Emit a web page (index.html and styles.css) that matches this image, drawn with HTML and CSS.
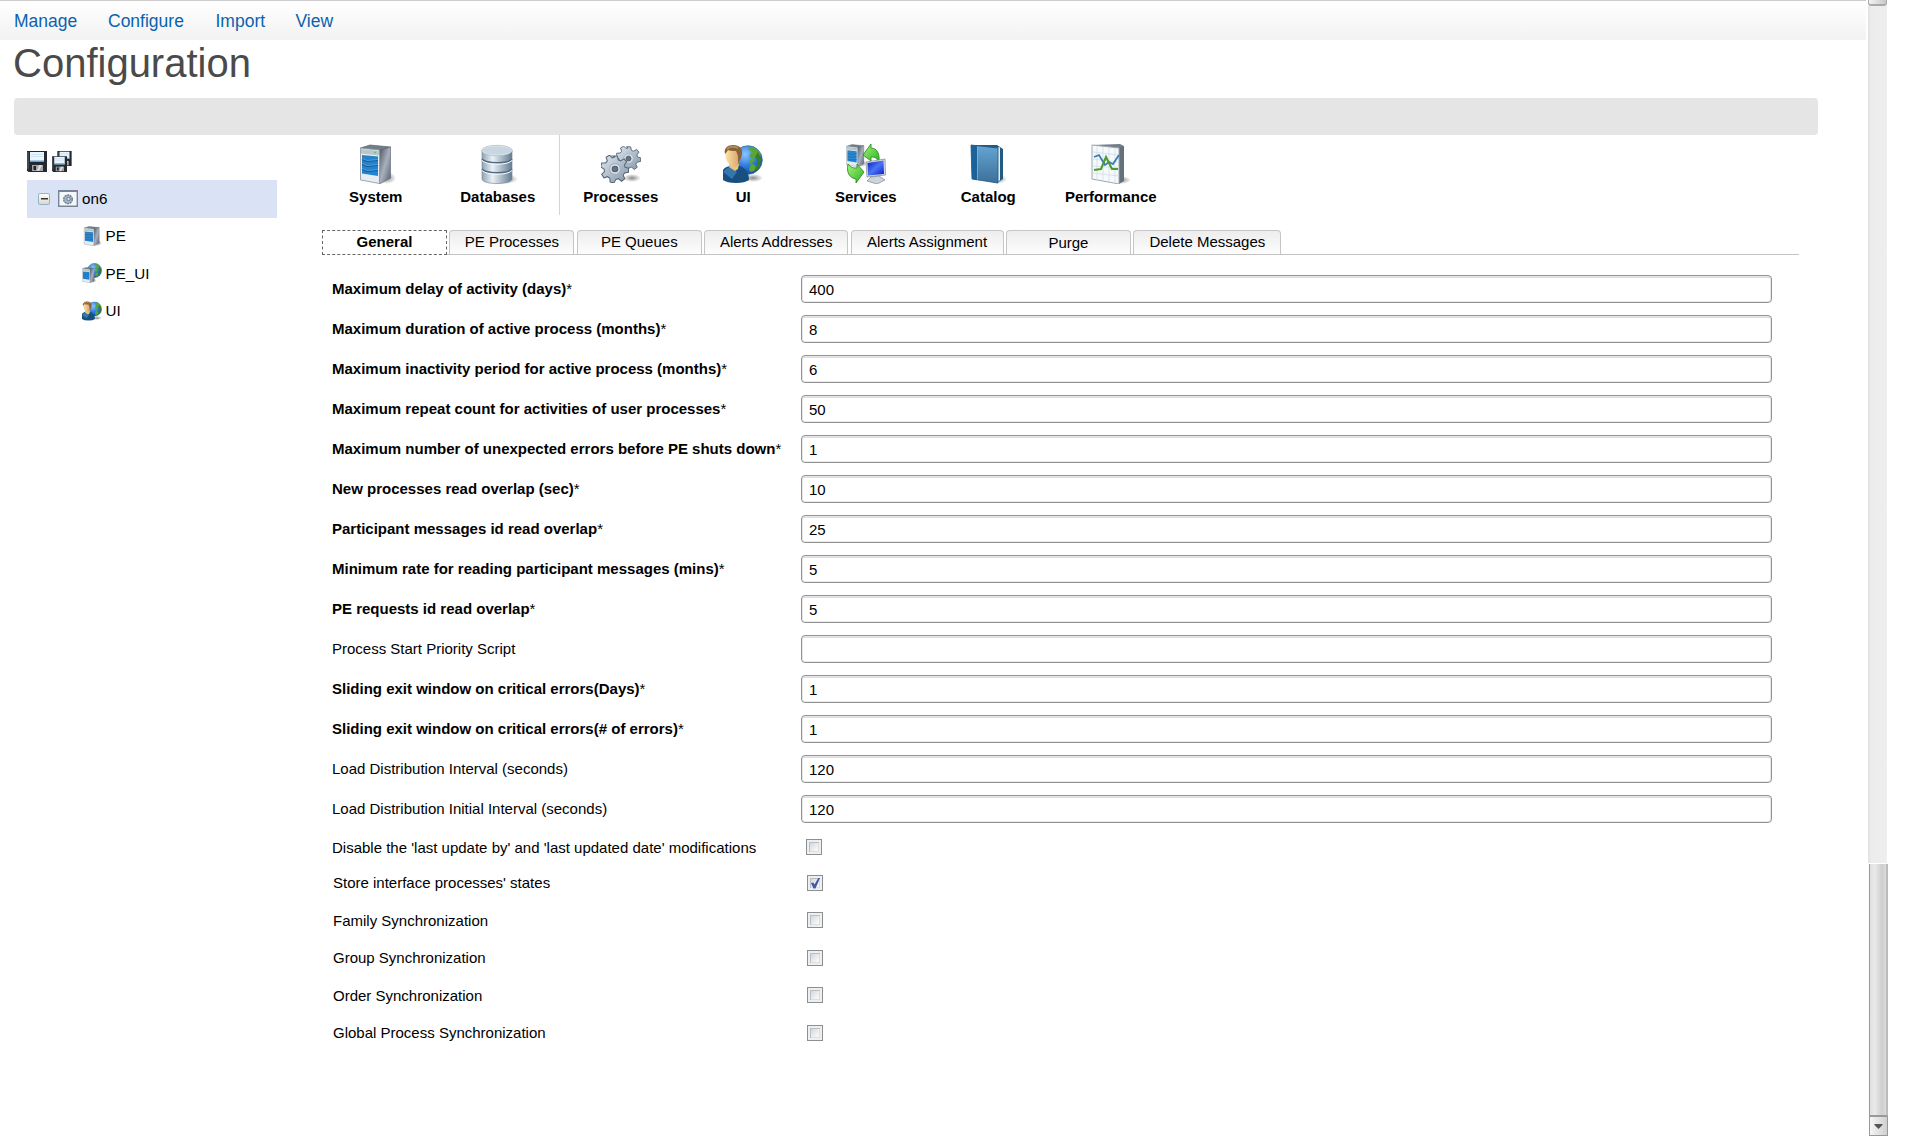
FILE: index.html
```html
<!DOCTYPE html>
<html lang="en">
<head>
<meta charset="utf-8">
<title>Configuration</title>
<link rel="stylesheet" href="styles.css">
</head>
<body>
<svg class="defs" width="0" height="0" aria-hidden="true">
  <defs>
    <linearGradient id="steel" x1="0" y1="0" x2="1" y2="0"><stop offset="0" stop-color="#8fa3b5"/><stop offset=".35" stop-color="#eaf1f6"/><stop offset="1" stop-color="#647b90"/></linearGradient>
    <linearGradient id="side" x1="0" y1="0" x2="1" y2="1"><stop offset="0" stop-color="#4c5563"/><stop offset=".5" stop-color="#a9b0bd"/><stop offset="1" stop-color="#565f70"/></linearGradient>
    <linearGradient id="blue" x1="0" y1="0" x2="1" y2="1"><stop offset="0" stop-color="#2f7fc0"/><stop offset="1" stop-color="#1a86dc"/></linearGradient>
    <linearGradient id="book" x1="0" y1="0" x2="0" y2="1"><stop offset="0" stop-color="#65a5d3"/><stop offset="1" stop-color="#3c7099"/></linearGradient>
    <radialGradient id="ocean" cx=".4" cy=".3" r=".8"><stop offset="0" stop-color="#8cc5ff"/><stop offset=".5" stop-color="#2f7de0"/><stop offset="1" stop-color="#123f96"/></radialGradient>
    <radialGradient id="shade"><stop offset="0" stop-color="#000" stop-opacity=".45"/><stop offset="1" stop-color="#000" stop-opacity="0"/></radialGradient>
    <linearGradient id="screen" x1="0" y1="0" x2="1" y2="1"><stop offset="0" stop-color="#0716c0"/><stop offset=".5" stop-color="#4c77f4"/><stop offset="1" stop-color="#0a18c9"/></linearGradient>
    <linearGradient id="leaf" x1="0" y1="0" x2="1" y2="1"><stop offset="0" stop-color="#a6f27c"/><stop offset="1" stop-color="#2bb51f"/></linearGradient>
    <linearGradient id="gearfill" x1="0" y1="0" x2="1" y2="1"><stop offset="0" stop-color="#dfe7ee"/><stop offset="1" stop-color="#8496a9"/></linearGradient>
    <linearGradient id="skin" x1="0" y1="0" x2="1" y2="0"><stop offset="0" stop-color="#ffe3a8"/><stop offset="1" stop-color="#d19c68"/></linearGradient>
    <symbol id="server" viewBox="0 0 40 40">
      <ellipse cx="31" cy="34" rx="9" ry="6" fill="url(#shade)"/>
      <path d="M4.500 4 14 1l20.500 2-11 4z" fill="#727d8a" stroke="#596570" stroke-width=".7"/>
      <path d="m23.500 6 11-3v31l-11 6z" fill="url(#side)" stroke="#59616f" stroke-width=".6"/>
      <path d="m4.500 4 19 2v33.500l-19-3.500z" fill="#e5edf2" stroke="#8793a0" stroke-width=".8"/>
      <path d="m5 5 18 2v4.500l-18-2z" fill="#b8c8ca"/><circle cx="19" cy="8.500" r=".9" fill="#65c24c"/>
      <path d="m6 11 16 1.500V32L6 29.500z" fill="url(#blue)"/>
      <path d="m6 15.500 5 2 11-1M6 20.500l5 2 11-1M6 25.500l5 2 11-1" fill="none" stroke="#155c9b" stroke-width="1.200"/>
      <path d="m6 14.500 5 2 11-1M6 19.500l5 2 11-1M6 24.500l5 2 11-1" fill="none" stroke="#6fb5e6" stroke-width=".5"/>
    </symbol>
    <symbol id="database" viewBox="0 0 40 40">
      <ellipse cx="28" cy="35" rx="12" ry="5" fill="url(#shade)"/>
      <path d="M4 6v29c0 6 30 6 30 0V6z" fill="url(#steel)" stroke="#7b8c9c" stroke-width=".7"/>
      <path d="M4 15c4 5 26 5 30 0M4 25c4 5 26 5 30 0" fill="none" stroke="#526c83" stroke-width="1.500"/>
      <path d="M4 16.500c4 5 26 5 30 0M4 26.500c4 5 26 5 30 0" fill="none" stroke="#f5fafd" stroke-width="1"/>
      <ellipse cx="19" cy="6.500" rx="15" ry="4.800" fill="#c7d6e1" stroke="#f3f7fa"/><ellipse cx="19" cy="6.500" rx="15.300" ry="5.200" fill="none" stroke="#99a9b7" stroke-width=".6"/>
    </symbol>
    <symbol id="gear" viewBox="-12 -12 24 24">
      <g fill="url(#gearfill)" stroke="#56687a" stroke-width=".9">
        <path d="M-2-11.200h4l.8 3.300 2 .9 3-1.700 2.200 2.600-2 2.700.7 2 3.100.8-.3 3.500-3.300.6-1.200 1.900 1.400 3-2.900 2.100-2.500-2.200-2.300.6-1.500 2.900-3.400-.6-.2-3.300-1.900-1.300-3.200 1-1.900-3 2.400-2.400-.4-2.200-2.900-1.700.9-3.400 3.400-.1 1.400-1.700-1-3.200 2.900-1.800 2.300 2.300 2-.7z"/>
        <circle r="4.600" fill="#dce5ed" stroke="#a2afbb"/><circle r="2.400" fill="#657484" stroke="#4e5d6c"/>
      </g>
    </symbol>
    <symbol id="gears" viewBox="0 0 40 40">
      <ellipse cx="31" cy="34" rx="9" ry="4" fill="url(#shade)"/>
      <use href="#gear" x="15" y="2" width="25" height="25"/><use href="#gear" x="0" y="11" width="28" height="28"/>
    </symbol>
    <symbol id="globe" viewBox="0 0 30 30">
      <circle cx="15" cy="15" r="14.300" fill="url(#ocean)" stroke="#3267a8" stroke-width=".7"/>
      <path d="M15 2c6-1 11 3 13 8l-2 2-3-1-2 3-4 1-1 3 4 1 4 3-3 4-3 1-2-2 1-4 2-3 3-3-6-3 2-4 2-1-4-2z" fill="#58a735"/><path d="m25 7 3 6-1 9-4 4-1-3 3-4-1-5-2-2z" fill="#397f28"/>
    </symbol>
    <symbol id="user" viewBox="0 0 40 40">
      <ellipse cx="30" cy="34" rx="10" ry="4" fill="url(#shade)"/>
      <use href="#globe" x="10" y="1" width="30" height="30"/>
      <path d="M0 36V26c2-3 5-4 8-4h9c5 2 9 6 9 14q-4 3-13 3T0 36z" fill="#174f7e"/><path d="M0 28c3-4 6-5 8-5l6 5-5 7z" fill="#3277ad"/>
      <path d="m6 19 10 1-1 5-3 2-6-4z" fill="#eac27c"/>
      <path d="M2.500 8q0-6 7-6c7 0 9 4 8 10q0 7-4 10-5 1-8-3-4-4-3-11z" fill="url(#skin)"/>
      <path d="M2 10C.5 4 5 1 10 1c8 0 11 5 8 13l-3 6 0-8q-1-3-2-5-6 0-8-1-1 2-3 4z" fill="#8a6238"/><path d="M4 5q4-4 11-1" fill="none" stroke="#b99563" stroke-width="1.500"/>
    </symbol>
    <symbol id="services" viewBox="0 0 40 40">
      <use href="#server" x="-2" y="0" width="23" height="23"/>
      <path d="M17 11 25 0v4c6 0 9 6 8 14-3-5-5-5-8-5v4z" fill="url(#leaf)" stroke="#25811e" stroke-width=".8"/>
      <path d="m20 18 19-3 .5 16-18.500 2z" fill="#d9e0e6" stroke="#788493" stroke-width=".7"/><path d="m21.500 19 16-2.500.5 13.500-16 1.500z" fill="url(#screen)"/>
      <path d="m25 33 8-1 6 4-8 4-10-3z" fill="#cdd4db" stroke="#7e8790" stroke-width=".7"/>
      <path d="M2 20c3 4 6 4 9 4v-4l7 8-8 11v-4c-6-1-10-6-8-15z" fill="url(#leaf)" stroke="#25811e" stroke-width=".8"/>
    </symbol>
    <symbol id="catalog" viewBox="0 0 40 40">
      <ellipse cx="29" cy="35" rx="10" ry="5" fill="url(#shade)"/>
      <path d="m3 1 26 0 6 4v30l-6 4z" fill="#245b83"/><path d="m29 4 3-1v33l-3 3z" fill="#e4eaf0"/>
      <path d="m3 1 27 3v35L4 35z" fill="url(#book)" stroke="#1b5583" stroke-width=".8"/><path d="m3 1 6 1v34l-5-1z" fill="#1c629a"/><path d="M9.500 3v32.500" stroke="#7bb6df" stroke-width=".8"/>
    </symbol>
    <symbol id="chart" viewBox="0 0 40 40">
      <ellipse cx="30" cy="36" rx="10" ry="4" fill="url(#shade)"/>
      <path d="m1 1 28-1 4 2-3 3z" fill="#737e87"/><path d="m28 4 5-2v35l-5 3z" fill="#65717a"/>
      <path d="m1 1 27 3v36L1 35z" fill="#f6f9fb" stroke="#9aa8b3"/>
      <path d="M6 2v34M12 3v34M18 4v34M24 4v35M2 8l26 3M2 15l26 3M2 22l26 2M2 29l26 3" stroke="#cdd9e5" stroke-width=".7"/>
      <path d="m3 13 5-2 6 10 4-3 4 2 6-9" fill="none" stroke="#387bb8" stroke-width="1.800"/><path d="m3 26 7-1 5-12 6 12h6" fill="none" stroke="#4b9c2c" stroke-width="2"/>
    </symbol>
    <symbol id="disk" viewBox="0 0 20 21">
      <path d="M0 0h20v21H1.500L0 19.500z" fill="#25282c"/><path d="M1 1v17" stroke="#666b70"/><path d="M3 1h14v10H3z" fill="#e9f5fd"/><path d="M3 9.500h14V11H3z" fill="#50a6e0"/><path d="M4 3.500h12M4 5.500h12" stroke="#c4dceb" stroke-width=".7"/>
      <path d="M5 14h11v6H5z" fill="#a2a5a9"/><path d="M6.500 15H9v4H6.500z" fill="#202225"/><path d="m12 14 3 0-3 6h-2z" fill="#ddd"/>
    </symbol>
    <symbol id="disks" viewBox="0 0 20 21">
      <use href="#disk" x="5" y="0" width="15" height="15"/><use href="#disk" x="0" y="5" width="15" height="16"/>
    </symbol>
    <symbol id="appwin" viewBox="0 0 20 17">
      <path d="M.7.700h18.600v15.600H.700z" fill="#f4f8fb" stroke="#778595" stroke-width="1.400"/><path d="M0 0h20v2H0z" fill="#75869c"/><path d="M16 .5h2v1h-2z" fill="#e25d4c"/>
      <circle cx="10" cy="9.300" r="4.300" fill="#a9b8c6" stroke="#66788b" stroke-width="1.300" stroke-dasharray="2 .7"/><circle cx="10.500" cy="9" r="1.700" fill="#d9e3eb" stroke="#56687a" stroke-width=".8"/>
    </symbol>
    <symbol id="serverglobe" viewBox="0 0 20 20"><use href="#globe" x="5" y="0" width="15" height="15"/><use href="#server" x="-1.500" y="4" width="16" height="16"/></symbol>
  </defs>
</svg>

<div class="window">
  <main class="page">
    <nav class="menu"><a>Manage</a><a>Configure</a><a>Import</a><a>View</a></nav>
    <h1>Configuration</h1>
    <div class="band"></div>
    <div class="columns">
      <aside class="tree">
        <div class="actions"><svg><use href="#disk"/></svg><svg><use href="#disks"/></svg></div>
        <div class="node root"><span class="toggle"></span><svg class="app"><use href="#appwin"/></svg>on6</div>
        <div class="node"><svg><use href="#server"/></svg>PE</div>
        <div class="node"><svg><use href="#serverglobe"/></svg>PE_UI</div>
        <div class="node"><svg><use href="#user"/></svg>UI</div>
      </aside>
      <section class="main">
        <div class="tools">
          <div class="tool"><svg><use href="#server"/></svg>System</div>
          <div class="tool split"><svg><use href="#database"/></svg>Databases</div>
          <div class="tool"><svg><use href="#gears"/></svg>Processes</div>
          <div class="tool"><svg><use href="#user"/></svg>UI</div>
          <div class="tool"><svg><use href="#services"/></svg>Services</div>
          <div class="tool"><svg><use href="#catalog"/></svg>Catalog</div>
          <div class="tool"><svg><use href="#chart"/></svg>Performance</div>
        </div>
        <div class="tabs">
          <div class="tab active">General</div><div class="tab">PE Processes</div><div class="tab">PE Queues</div><div class="tab addresses">Alerts Addresses</div><div class="tab assignment">Alerts Assignment</div><div class="tab purge">Purge</div><div class="tab delete">Delete Messages</div>
        </div>
        <form class="form">
          <label class="row req"><span>Maximum delay of activity (days)<i>*</i></span><input value="400"></label>
          <label class="row req"><span>Maximum duration of active process (months)<i>*</i></span><input value="8"></label>
          <label class="row req"><span>Maximum inactivity period for active process (months)<i>*</i></span><input value="6"></label>
          <label class="row req"><span>Maximum repeat count for activities of user processes<i>*</i></span><input value="50"></label>
          <label class="row req"><span>Maximum number of unexpected errors before PE shuts down<i>*</i></span><input value="1"></label>
          <label class="row req"><span>New processes read overlap (sec)<i>*</i></span><input value="10"></label>
          <label class="row req"><span>Participant messages id read overlap<i>*</i></span><input value="25"></label>
          <label class="row req"><span>Minimum rate for reading participant messages (mins)<i>*</i></span><input value="5"></label>
          <label class="row req"><span>PE requests id read overlap<i>*</i></span><input value="5"></label>
          <label class="row"><span>Process Start Priority Script</span><input value=""></label>
          <label class="row req"><span>Sliding exit window on critical errors(Days)<i>*</i></span><input value="1"></label>
          <label class="row req"><span>Sliding exit window on critical errors(# of errors)<i>*</i></span><input value="1"></label>
          <label class="row"><span>Load Distribution Interval (seconds)</span><input value="120"></label>
          <label class="row"><span>Load Distribution Initial Interval (seconds)</span><input value="120"></label>
          <div class="check first"><span>Disable the 'last update by' and 'last updated date' modifications</span><b class="box"></b></div>
          <div class="check store"><span>Store interface processes' states</span><b class="box"><svg viewBox="0 0 14 14"><path d="M3 7 5.300 6.500l1.200 2L10.300 2H12L7.500 12.500h-2z" fill="#4059a0"/></svg></b></div>
          <div class="check"><span>Family Synchronization</span><b class="box"></b></div>
          <div class="check raised"><span>Group Synchronization</span><b class="box"></b></div>
          <div class="check"><span>Order Synchronization</span><b class="box"></b></div>
          <div class="check raised"><span>Global Process Synchronization</span><b class="box"></b></div>
        </form>
      </section>
    </div>
  </main>
  <div class="scroll"><div class="up"></div><div class="track"></div><div class="thumb"></div><div class="down"><svg viewBox="0 0 8 5"><path d="M0 0h8v1L4 5 0 1z" fill="#555"/></svg></div></div>
</div>
</body>
</html>
```

FILE: styles.css
```css
* { box-sizing: border-box; }
body { margin: 0; background: #fff; color: #000; font-family: "Liberation Sans", Arial, sans-serif; font-size: 15px; overflow: hidden; }
.defs { display: block; position: absolute; }
.window { display: flex; height: 1136px; }
.page { width: 1868px; flex: none; }
.menu { width: 1866px; height: 40px; border-top: 1px solid #ccc; background: linear-gradient(#fff, #f2f2f2); display: flex; padding-left: 14px; font-size: 17.500px; line-height: 41px; color: #0b62b0; }
.menu a { width: 94px; }
.menu a:nth-child(2) { width: 107.500px; }
.menu a:nth-child(3) { width: 80px; }
h1 { margin: 0; padding-left: 13px; height: 58px; font-size: 40px; line-height: 46px; font-weight: 400; color: #4a4a4a; }
.band { margin-left: 14px; width: 1804px; height: 37px; border-radius: 4px; background: #e5e5e5; }
.columns { display: flex; }
.tree { width: 250px; margin: 16px 45px 0 27px; flex: none; font-size: 15.200px; }
.actions { display: flex; gap: 5px; height: 29px; }
.actions svg { width: 20px; height: 21px; }
.node { display: flex; align-items: center; height: 37.500px; padding: 0 0 2px 55px; }
.node svg { width: 20px; height: 20px; margin-right: 3.500px; }
.node.root { height: 38px; padding: 0 0 1px 11px; background: #d9e3f5; }
.node svg.app { height: 17px; margin-right: 4px; }
.toggle { width: 12px; height: 12px; margin-right: 8px; border: 1px solid #94b3c9; border-radius: 2px; background: linear-gradient(#333, #333) center / 7px 1.500px no-repeat, linear-gradient(#fff, #dfd8c8); }
.main { width: 1477px; flex: none; }
.tools { display: flex; height: 80px; margin-left: -7.500px; }
.tool { width: 122.500px; height: 80px; padding-top: 9px; display: flex; flex-direction: column; align-items: center; font-weight: 700; line-height: 17px; }
.tool svg { width: 40px; height: 40px; margin-bottom: 4px; }
.tool.split { border-right: 1px solid #d5d5d5; }
.tabs { display: flex; gap: 2.400px; height: 40px; padding-top: 15px; border-bottom: 1px solid #c3c3c3; }
.tab { width: 125px; height: 24px; text-align: center; line-height: 22px; border: 1px solid #c6c6c6; border-bottom: 0; border-radius: 4px 4px 0 0; background: linear-gradient(#ededed, #fdfdfd); }
.tab.active { border: 1px dashed #666; border-radius: 0; height: 25px; background: #fff; font-weight: 700; }
.tab.addresses { width: 144px; }
.tab.assignment { width: 153px; }
.tab.purge { line-height: 24px; }
.tab.delete { width: 148px; }
.form { padding: 20px 0 0 10px; }
.row { display: flex; height: 40px; }
.row span { width: 469px; line-height: 27px; }
.req { font-weight: 700; }
.req i { font-style: normal; font-weight: 400; }
.row input { width: 971px; height: 28px; padding: 1px 6px 0 7px; border: 1px solid #929292; border-radius: 4px; font: 15px "Liberation Sans", Arial, sans-serif; color: #000; background: #fff; box-shadow: inset 0 0 0 1px #e8e8e8, inset 0 2px 0 #ddd; outline: 0; }
.check { display: flex; height: 37.500px; padding-left: 1px; }
.check span { width: 474px; line-height: 17px; }
.check.first { height: 36px; padding-left: 0; margin-top: 4px; }
.check.store { height: 37px; }
.check.store span, .check.raised span { line-height: 16px; }
.box { width: 16px; height: 16px; border: 1px solid #8b8f90; padding: 0; background: linear-gradient(135deg, #d3d7dc 20%, #fafafa 75%); box-shadow: inset 0 0 0 2px #efefef, inset 3px 3px 0 #b9bfc6, inset -3px -3px 0 #dcdfe2; }
.box svg { display: block; width: 14px; height: 14px; }
.scroll { width: 20px; height: 1136px; display: flex; flex-direction: column; }
.up { width: 19px; height: 6px; border: solid #aaa; border-width: 0 1px 2px; border-radius: 0 0 3px 3px; background: linear-gradient(90deg, #f3f3f3, #c8c8c8); }
.track { width: 19px; height: 857px; background: linear-gradient(90deg, #e0e0e0, #ececec 3px, #eee); }
.thumb { margin: 1px 0 0 1px; height: 252px; border: solid #999; border-width: 0 2px 1px 1px; border-right-color: #bbb; background: linear-gradient(90deg, #e0e0e0, #eaeaea 30%, #cecece 75%, #dcdcdc); }
.down { margin-left: 1px; height: 20px; border: 1px solid #999; background: linear-gradient(90deg, #f5f5f5, #d0d0d0); display: flex; align-items: center; justify-content: center; }
.down svg { width: 9px; height: 5px; }
```
